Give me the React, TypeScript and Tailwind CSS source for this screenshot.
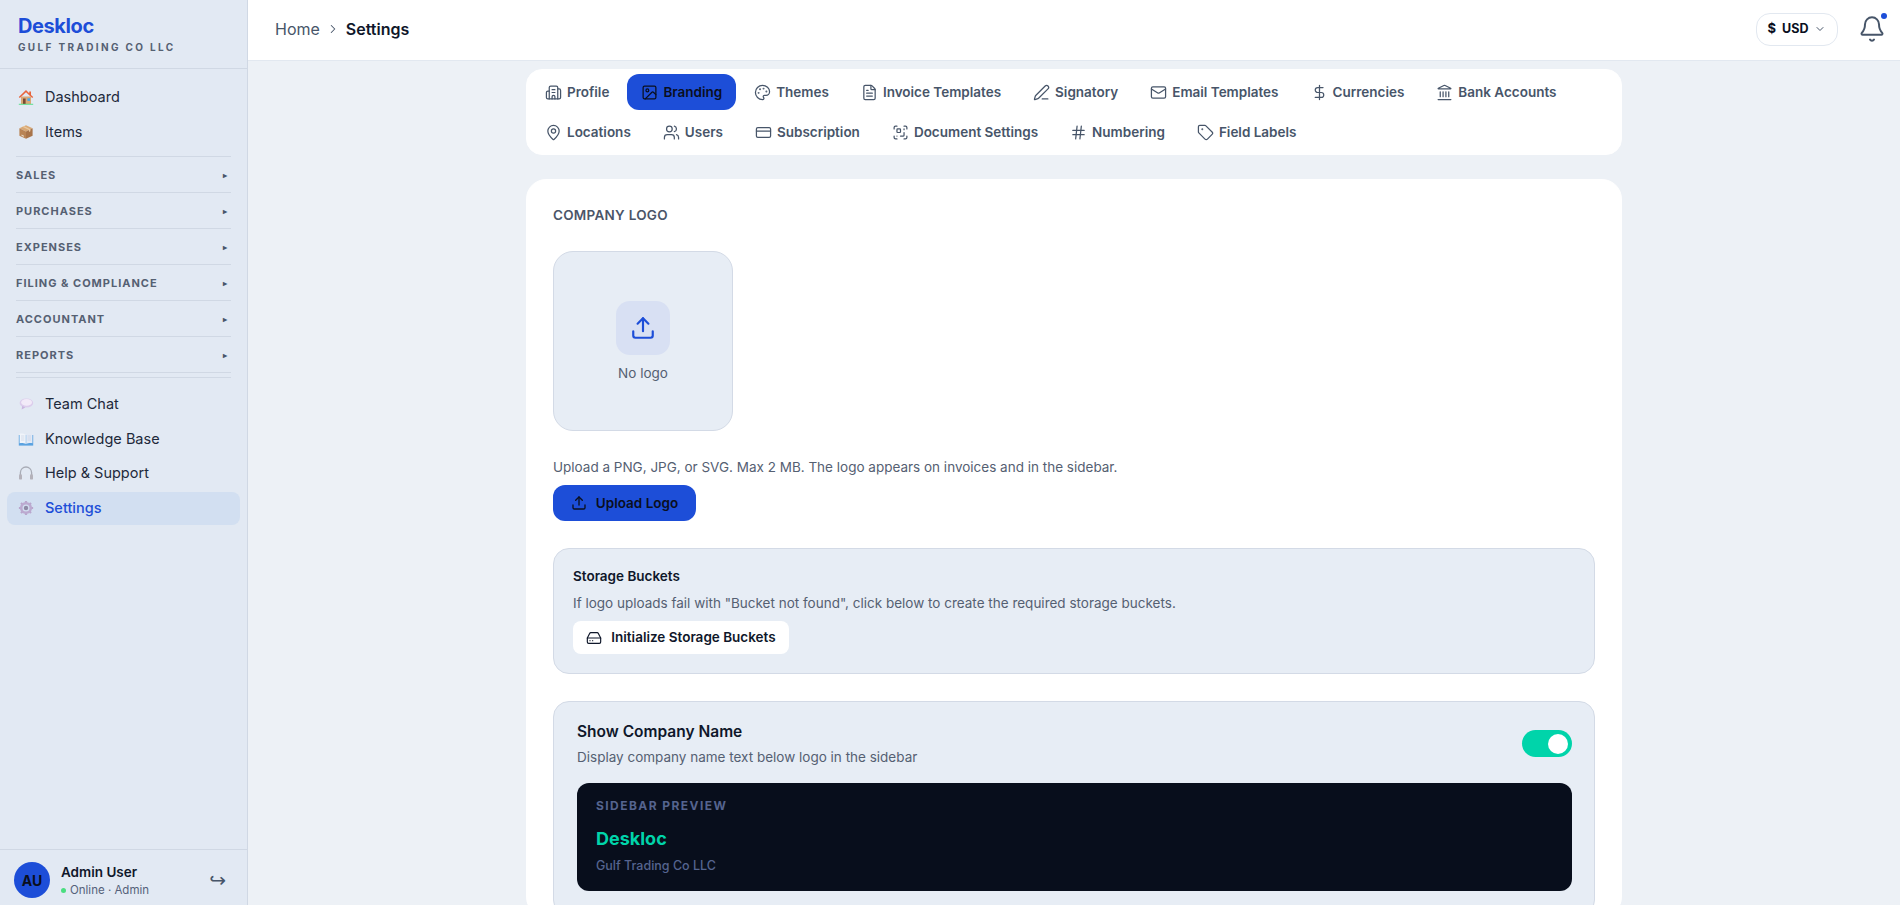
import React from "react";
import { Building2, Image, Palette, FileText, PenLine, Mail, DollarSign, Landmark, MapPin, Users, CreditCard, ScanQrCode, Hash, Tag, Upload, HardDrive, Bell, ChevronDown, ChevronRight } from "lucide-react";

const tabsRow = [
  [Building2, "Profile"], [Image, "Branding"], [Palette, "Themes"], [FileText, "Invoice Templates"], [PenLine, "Signatory"], [Mail, "Email Templates"], [DollarSign, "Currencies"], [Landmark, "Bank Accounts"],
  [MapPin, "Locations"], [Users, "Users"], [CreditCard, "Subscription"], [ScanQrCode, "Document Settings"], [Hash, "Numbering"], [Tag, "Field Labels"],
] as const;

const HouseIcon = () => (
  <svg viewBox="0 0 16 16" className="h-[16px] w-[16px]">
    <path d="M3 7.5h10V15H3z" fill="#d9a878" />
    <path d="M8 1 .8 8l1 1L8 3.2 14.2 9l1-1-2.2-2.1V2.4h-1.8v1.8z" fill="#e8643c" />
    <path d="M5 9.5h2.6V15H5z" fill="#7a4a32" />
    <path d="M9.4 9.3h2.6v2.6H9.4z" fill="#4aa8e8" />
    <path d="M.8 14.8h14.4v.9H.8z" fill="#4ade80" />
  </svg>
);
const BoxIcon = () => (
  <svg viewBox="0 0 16 16" className="h-[16px] w-[16px]">
    <path d="M8 1.2 14.6 4.3 8 7.4 1.4 4.3z" fill="#d9a874" />
    <path d="M1.4 4.3 8 7.4v7.4l-6.6-3z" fill="#b98455" />
    <path d="M14.6 4.3 8 7.4v7.4l6.6-3z" fill="#a8744a" />
    <path d="M4.4 2.8 11 5.9v2l1.4-.7V5.2L5.8 2.1z" fill="#e9c9a0" />
    <path d="M3.5 10.4 5.8 11.5v1.4l-2.3-1.1z" fill="#e6d5c0" />
  </svg>
);
const BubbleIcon = () => (
  <svg viewBox="0 0 16 16" className="h-[16px] w-[16px]">
    <ellipse cx="8.4" cy="7" rx="6.8" ry="4.6" fill="#dccdec" />
    <path d="M4.2 10 3.6 13.4 7.4 11.4z" fill="#cbb6e0" />
    <ellipse cx="8.6" cy="6.4" rx="5.4" ry="3.4" fill="#f2eaf8" />
  </svg>
);
const BookIcon = () => (
  <svg viewBox="0 0 16 16" className="h-[16px] w-[16px]">
    <path d="M.8 4h14.4v10.6H.8z" fill="#5aa2e0" />
    <path d="M1.6 2.6C4 2.4 6.4 2.8 7.8 3.8v9.2C6.4 12.2 4 11.9 1.6 12.2z" fill="#f0f4fa" />
    <path d="M14.4 2.6c-2.4-.2-4.8.2-6.2 1.2v9.2c1.4-.8 3.8-1.1 6.2-.8z" fill="#e2e9f5" />
    <path d="M3 5h3.4M3 7h3.4M3 9h3.4M9.6 5H13M9.6 7H13M9.6 9H13" stroke="#c3cfe0" strokeWidth=".6" />
  </svg>
);
const PhonesIcon = () => (
  <svg viewBox="0 0 16 16" className="h-[16px] w-[16px]">
    <path d="M2.4 10V7.6a5.6 5.6 0 0 1 11.2 0V10" fill="none" stroke="#a8acb6" strokeWidth="1.3" />
    <rect x="1" y="9.2" width="3" height="5.4" rx="1.2" fill="#b4b2ba" />
    <rect x="12" y="9.2" width="3" height="5.4" rx="1.2" fill="#b4b2ba" />
  </svg>
);
const GearIcon = () => (
  <svg viewBox="0 0 16 16" className="h-[16px] w-[16px]">
    <path d="M8 3 8 .9M8 15.1V13M3 8H.9M15.1 8H13M4.5 4.5 3 3M13 13l-1.5-1.5M11.5 4.5 13 3M3 13l1.5-1.5" stroke="#b9a6cc" strokeWidth="2.2" />
    <circle cx="8" cy="8" r="4.8" fill="none" stroke="#bcaad0" strokeWidth="2.6" />
    <circle cx="8" cy="8" r="2.2" fill="#8f8aa6" />
  </svg>
);

function NavItem({ icon, label, active, raised }: { icon: React.ReactNode; label: string; active?: boolean; raised?: boolean }) {
  return (
    <div className={"mx-[7px] flex h-[33px] items-center gap-[11px] rounded-[8px] pl-[11px] text-[14.5px] " + (raised ? "pb-[1px] " : "") + (active ? "bg-[#d2dff1] text-[#1d4ed8] font-medium" : "text-[#1e293b]")}>
      <span className="flex w-[16px] justify-center leading-none">{icon}</span>
      <span>{label}</span>
    </div>
  );
}

function Section({ label }: { label: string }) {
  return (
    <div className="mx-[16px] flex h-[36px] items-center justify-between border-t border-[#d0d8e4] pr-[3px] pt-[1px] text-[11px] font-bold tracking-[0.09em] text-[#556072]">
      <span>{label}</span>
      <span className="mb-[1px] text-[8px] leading-none text-[#475569]">▸</span>
    </div>
  );
}

export default function App() {
  return (
    <div className="flex h-[905px] w-full overflow-hidden bg-[#edf1f6] [font-family:Inter,sans-serif] text-[#0f172a]">
      <aside className="flex h-full w-[248px] shrink-0 flex-col border-r border-[#d0d8e4] bg-[#e2e9f3]">
        <div className="h-[69px] shrink-0 border-b border-[#d0d8e4] pl-[18px] pt-[13px]">
          <div className="text-[20px] font-bold leading-[26px] tracking-[-0.02em] text-[#1d4ed8]">Deskloc</div>
          <div className="mt-[1px] text-[10px] font-bold leading-[14px] tracking-[0.235em] text-[#556072]">GULF TRADING CO LLC</div>
        </div>
        <div className="pt-[11px]">
          <div className="flex flex-col gap-[2px]">
            <NavItem icon={<HouseIcon />} label="Dashboard" />
            <NavItem icon={<BoxIcon />} label="Items" />
          </div>
          <div className="mt-[8px]">
            {["SALES", "PURCHASES", "EXPENSES", "FILING & COMPLIANCE", "ACCOUNTANT", "REPORTS"].map((s) => (
              <Section key={s} label={s} />
            ))}
          </div>
          <div className="mx-[16px] h-[6px] border-y border-[#d0d8e4]" />
          <div className="mt-[10px] flex flex-col gap-[1.5px]">
            <NavItem icon={<BubbleIcon />} label="Team Chat" raised />
            <NavItem icon={<BookIcon />} label="Knowledge Base" raised />
            <NavItem icon={<PhonesIcon />} label="Help & Support" raised />
            <NavItem icon={<GearIcon />} label="Settings" active raised />
          </div>
        </div>
        <div className="mt-auto flex h-[56px] shrink-0 items-center border-t border-[#d0d8e4] pl-[14px] pt-[5px]">
          <div className="flex h-[36px] w-[36px] items-center justify-center rounded-full bg-[#1d4ed8] text-[14px] font-bold text-[#0a0f1e]">AU</div>
          <div className="ml-[11px] pt-[2px]">
            <div className="text-[13.5px] font-semibold leading-[17px]">Admin User</div>
            <div className="mt-[1px] flex items-center text-[11.5px] leading-[16px] text-[#55617a]">
              <span className="mr-[4px] h-[5px] w-[5px] rounded-full bg-[#4ade80]" />Online · Admin
            </div>
          </div>
          <span className="ml-auto mr-[21px] [font-family:'DejaVu_Sans',sans-serif] text-[20px] leading-none text-[#475569]">↪</span>
        </div>
      </aside>

      <div className="flex min-w-0 flex-1 flex-col">
        <header className="flex h-[61px] shrink-0 items-center justify-between border-b border-[#e2e8f0] bg-white pb-[2px] pl-[27px] pr-[14px]">
          <div className="flex items-center text-[16px]">
            <span className="text-[#475569]">Home</span>
            <ChevronRight className="mx-[6px] h-[14px] w-[14px] text-[#475569]" strokeWidth={1.75} />
            <span className="font-semibold text-[#0f172a]">Settings</span>
          </div>
          <div className="flex items-center">
            <div className="flex h-[33px] w-[82px] items-center justify-center gap-[6px] rounded-[14px] border border-[#e2e8f0] text-[12.5px] font-bold text-[#0a0f1e]">
              <span className="text-[13px]">$</span>
              <span>USD</span>
              <ChevronDown className="h-[12px] w-[12px] text-[#475569]" />
            </div>
            <div className="relative ml-[19px] flex h-[30px] w-[29px] items-center justify-center">
              <Bell className="h-[28px] w-[28px] text-[#475569]" strokeWidth={1.7} />
              <span className="absolute right-[-1px] top-[-1px] h-[6px] w-[6px] rounded-full bg-[#1d4ed8]" />
            </div>
          </div>
        </header>

        <main className="mx-auto w-[1096px] flex-1 pt-[8px]">
          <nav className="flex flex-wrap gap-[4px] rounded-[16px] border border-white bg-white p-[4px]">
            {tabsRow.map(([Icon, label]) => {
              const active = label === "Branding";
              return (
                <div key={label} className={"flex h-[36px] items-center gap-[5px] rounded-[12px] px-[14px] text-[13.5px] font-semibold " + (active ? "bg-[#1d4ed8] text-[#0a0f1e]" : "text-[#475569]")}>
                  <Icon className="h-[17px] w-[17px]" strokeWidth={1.75} />
                  <span>{label}</span>
                </div>
              );
            })}
          </nav>

          <section className="mt-[24px] rounded-[20px] border border-white bg-white px-[26px] pt-[25px]">
            <h2 className="text-[13.5px] font-semibold leading-[20px] tracking-[0.02em] text-[#4b5568]">COMPANY LOGO</h2>
            <div className="mt-[26px] flex h-[180px] w-[180px] flex-col items-center justify-center rounded-[20px] border border-[#d3dae6] bg-[#e7edf5]">
              <div className="flex h-[54px] w-[54px] items-center justify-center rounded-[14px] bg-[#d8e0f3]">
                <Upload className="h-[26px] w-[26px] text-[#1d4ed8]" strokeWidth={2} />
              </div>
              <div className="mt-[9px] text-[13.5px] leading-[18px] text-[#556072]">No logo</div>
            </div>
            <p className="mt-[27px] text-[13.5px] leading-[18px] text-[#556072]">Upload a PNG, JPG, or SVG. Max 2 MB. The logo appears on invoices and in the sidebar.</p>
            <button className="mt-[9px] flex h-[36px] w-[143px] items-center justify-center gap-[9px] rounded-[12px] bg-[#1d4ed8] text-[13.5px] font-semibold text-[#0a0f1e]">
              <Upload className="h-[16px] w-[16px]" strokeWidth={2} />Upload Logo
            </button>

            <div className="mt-[27px] h-[126px] rounded-[16px] border border-[#d3dae6] bg-[#e7edf5] pl-[19px] pt-[17px]">
              <div className="text-[13.5px] font-semibold leading-[20px] text-[#0f172a]">Storage Buckets</div>
              <div className="mt-[8px] text-[13.5px] leading-[18px] text-[#556072]">If logo uploads fail with "Bucket not found", click below to create the required storage buckets.</div>
              <button className="mt-[9px] flex h-[33px] w-[216px] items-center justify-center gap-[9px] rounded-[8px] bg-white text-[13.5px] font-semibold text-[#0f172a]">
                <HardDrive className="h-[16px] w-[16px]" strokeWidth={1.75} />Initialize Storage Buckets
              </button>
            </div>

            <div className="mt-[27px] rounded-[16px] border border-[#d3dae6] bg-[#e7edf5] pb-[24px] pl-[23px] pr-[22px] pt-[19px]">
              <div className="flex items-start justify-between">
                <div>
                  <div className="text-[15.5px] font-semibold leading-[22px] text-[#0f172a]">Show Company Name</div>
                  <div className="mt-[5px] text-[13.5px] leading-[18px] text-[#556072]">Display company name text below logo in the sidebar</div>
                </div>
                <div className="mt-[9px] flex h-[27px] w-[50px] items-center justify-end rounded-full bg-[#00d4aa] pr-[4px]">
                  <span className="h-[20px] w-[20px] rounded-full bg-white" />
                </div>
              </div>
              <div className="mt-[17px] h-[108px] rounded-[12px] bg-[#080e1c] pl-[19px] pt-[15px]">
                <div className="text-[12px] font-bold leading-[16px] tracking-[0.12em] text-[#55648f]">SIDEBAR PREVIEW</div>
                <div className="mt-[12px] text-[18px] font-bold leading-[26px] text-[#00d4aa]">Deskloc</div>
                <div className="mt-[6px] text-[12.5px] font-medium leading-[16px] text-[#55648f]">Gulf Trading Co LLC</div>
              </div>
            </div>
          </section>
        </main>
      </div>
    </div>
  );
}
